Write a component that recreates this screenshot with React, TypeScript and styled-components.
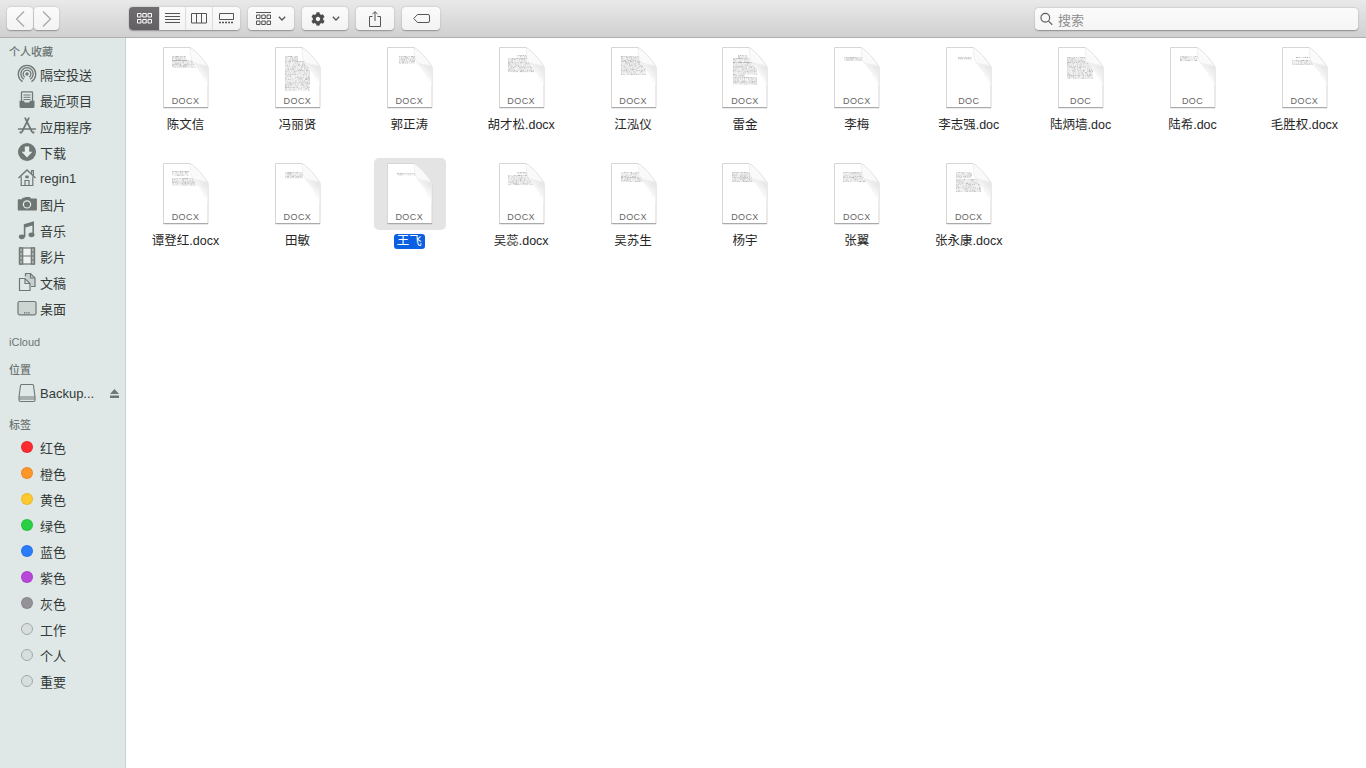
import styled, { createGlobalStyle } from "styled-components";
import { FaCog } from "react-icons/fa";
import { ReactNode } from "react";

type Block = [number, number, number, number];
type FileEntry = { name: string; kind: string; blocks: Block[]; selected?: boolean };

const FILES: FileEntry[] = [
    { name: "陈文信", kind: "DOCX", blocks: [[23, 37, 14, 18], [23, 49, 18, 25]] },
    { name: "冯丽贤", kind: "DOCX", blocks: [[24, 37, 14, 19], [24, 49, 19, 48]] },
    { name: "郭正涛", kind: "DOCX", blocks: [[26, 42, 14, 21]] },
    { name: "胡才松.docx", kind: "DOCX", blocks: [[32, 42, 13, 15], [23, 42, 16, 19], [23, 49, 20, 30]] },
    { name: "江泓仪", kind: "DOCX", blocks: [[24, 42, 14, 19], [24, 49, 19, 33]] },
    { name: "雷金", kind: "DOCX", blocks: [[30, 40, 13, 16], [25, 42, 16, 20], [25, 49, 20, 33], [25, 37, 33, 35], [25, 49, 35, 42]] },
    { name: "李梅", kind: "DOCX", blocks: [[24, 42, 15, 18]] },
    { name: "李志强.doc", kind: "DOC", blocks: [[26, 40, 15, 17]] },
    { name: "陆炳墙.doc", kind: "DOC", blocks: [[23, 42, 15, 20], [23, 49, 20, 36]] },
    { name: "陆希.doc", kind: "DOC", blocks: [[24, 42, 14, 19]] },
    { name: "毛胜权.docx", kind: "DOCX", blocks: [[28, 42, 15, 16], [24, 49, 18, 22]] },
    { name: "谭登红.docx", kind: "DOCX", blocks: [[23, 40, 13, 18], [23, 49, 20, 27]] },
    { name: "田敏", kind: "DOCX", blocks: [[24, 42, 14, 20]] },
    { name: "王飞", kind: "DOCX", blocks: [[24, 42, 15, 17]], selected: true },
    { name: "吴蕊.docx", kind: "DOCX", blocks: [[32, 42, 14, 16], [23, 49, 17, 27]] },
    { name: "吴苏生", kind: "DOCX", blocks: [[24, 42, 14, 19], [24, 49, 19, 24]] },
    { name: "杨宇", kind: "DOCX", blocks: [[24, 42, 14, 19], [24, 49, 19, 24]] },
    { name: "张翼", kind: "DOCX", blocks: [[23, 42, 14, 19], [23, 48, 19, 24]] },
    { name: "张永康.docx", kind: "DOCX", blocks: [[24, 40, 14, 20], [24, 49, 21, 33]] },
];

const TAGS: { name: string; color: string; hollow?: boolean }[] = [
    { name: "红色", color: "#fb2b30" },
    { name: "橙色", color: "#fd962a" },
    { name: "黄色", color: "#fdc92d" },
    { name: "绿色", color: "#2ad043" },
    { name: "蓝色", color: "#2b7cf8" },
    { name: "紫色", color: "#b846d8" },
    { name: "灰色", color: "#939296" },
    { name: "工作", color: "#d8dedc", hollow: true },
    { name: "个人", color: "#d8dedc", hollow: true },
    { name: "重要", color: "#d8dedc", hollow: true },
];

const G = "#6f7775";

const SideIcons: Record<string, ReactNode> = {
    airdrop: (
        <svg width="20" height="20" viewBox="0 0 20 20" fill="none" stroke={G}>
            <path strokeWidth="1.3" d="M5.6 17.6A8.7 8.7 0 1 1 14.4 17.6" />
            <path strokeWidth="1.3" d="M6.9 15.2A6.2 6.2 0 1 1 13.1 15.2" />
            <path strokeWidth="1.3" d="M7.8 13.2A3.9 3.9 0 1 1 12.2 13.2" />
            <circle cx="10" cy="10" r="1.7" fill={G} stroke="none" />
        </svg>
    ),
    recent: (
        <svg width="20" height="20" viewBox="0 0 20 20" fill="none" stroke={G}>
            <path strokeWidth="1.3" d="M4.5 11V2.7a.9.9 0 0 1 .9-.9h9.2a.9.9 0 0 1 .9.9V11" />
            <path strokeWidth="1" d="M6.5 5h7M6.5 7.3h7M6.5 9.6h7" />
            <path fill={G} stroke="none" d="M2.5 10.8h4.4l1 1.8h4.2l1-1.8h4.4v5.6a1.5 1.5 0 0 1-1.5 1.5H4a1.5 1.5 0 0 1-1.5-1.5z" />
        </svg>
    ),
    apps: (
        <svg width="20" height="20" viewBox="0 0 20 20" fill="none" stroke={G} strokeLinecap="round">
            <path strokeWidth="1.7" d="M8.2 2.2 14.8 15.5M11.8 2.2 5.200 15.500" />
            <path strokeWidth="1.400" d="M1.500 13h17" />
            <circle cx="3.800" cy="16.400" r="1.200" fill={G} stroke="none" />
            <circle cx="16.200" cy="16.400" r="1.200" fill={G} stroke="none" />
        </svg>
    ),
    download: (
        <svg width="20" height="20" viewBox="0 0 20 20">
            <circle cx="10" cy="10" r="9" fill={G} />
            <path fill="#e6eeec" d="M7.8 4.6h4.4v5.2h3.2L10 15.6 4.6 9.8h3.2z" />
        </svg>
    ),
    home: (
        <svg width="20" height="20" viewBox="0 0 20 20" fill="none" stroke={G} strokeWidth="1.2">
            <path d="M1.500 10 10 2l8.500 8" strokeWidth="1.400" />
            <path d="M14.600 5.600V2.600h1.800v4.600" />
            <path d="M4.200 8.500v9h11.600v-9" />
            <path d="M8 17.500v-5h4v5" />
            <rect x="8.300" y="7.600" width="3.400" height="2.600" fill={G} stroke="none" />
        </svg>
    ),
    photos: (
        <svg width="20" height="20" viewBox="0 0 20 20">
            <path fill={G} d="M1.500 5.200h3.200l1-1.400h1.600l.8-.8h4.800l1 1.400h5.400a.7.7 0 0 1 .6.8v10.500a.7.7 0 0 1-.7.7H1.400a.7.7 0 0 1-.6-.7V5.900a.7.7 0 0 1 .7-.7z" />
            <circle cx="10" cy="10.400" r="4.200" fill="#e6eeec" />
            <circle cx="10" cy="10.400" r="3" fill={G} />
        </svg>
    ),
    music: (
        <svg width="20" height="20" viewBox="0 0 20 20" fill={G}>
            <path d="M6.800 4.200 17 1.200v13h-1.600V5.600l-7 2V17H6.800z" />
            <ellipse cx="4.800" cy="16.800" rx="3" ry="2.400" />
            <ellipse cx="14.500" cy="14.800" rx="3" ry="2.400" />
        </svg>
    ),
    movies: (
        <svg width="20" height="20" viewBox="0 0 20 20" fill="none" stroke={G} strokeWidth="1.2">
            <rect x="2.500" y="2" width="15" height="16" fill="#eef3f1" />
            <rect x="2.500" y="2" width="3.200" height="16" fill="#a9b0ae" />
            <rect x="14.300" y="2" width="3.200" height="16" fill="#a9b0ae" />
            <path d="M5.700 10h8.600M2.500 6h3.200M2.500 10h3.200M2.500 14h3.200M14.300 6h3.200M14.300 10h3.200M14.300 14h3.200" />
        </svg>
    ),
    docs: (
        <svg width="20" height="20" viewBox="0 0 20 20" fill="none" stroke={G} strokeWidth="1.2">
            <path fill="#c9d1cf" d="M8.500 4.500v-3h5l4.500 4.500v8.500h-4" />
            <path fill="#dfe8e6" d="M2.500 6.500h5.500l5 5v7h-10.500z" />
            <path d="M8 6.500v5h5M13.500 1.500v4.500h4.500" />
        </svg>
    ),
    desktop: (
        <svg width="20" height="20" viewBox="0 0 20 20" fill="none" stroke={G}>
            <rect x="1" y="3.500" width="18" height="13.300" rx="1.500" strokeWidth="1.200" fill="#cdd5d3" />
            <path strokeWidth="1.200" strokeDasharray="1.200 1" stroke="#59605f" d="M7 14.800h6" />
        </svg>
    ),
    disk: (
        <svg width="20" height="20" viewBox="0 0 20 20" fill="none" stroke={G} strokeWidth="1.100">
            <path d="M4.500 1.500h11a1 1 0 0 1 1 1L18 14v3a1.500 1.500 0 0 1-1.500 1.500h-13A1.500 1.500 0 0 1 2 17v-3L3.500 2.500a1 1 0 0 1 1-1z" />
            <path d="M2 14h16M2 16h16" />
        </svg>
    ),
};

const FAVOURITES = [
    { name: "隔空投送", icon: "airdrop" },
    { name: "最近项目", icon: "recent" },
    { name: "应用程序", icon: "apps" },
    { name: "下载", icon: "download" },
    { name: "regin1", icon: "home" },
    { name: "图片", icon: "photos" },
    { name: "音乐", icon: "music" },
    { name: "影片", icon: "movies" },
    { name: "文稿", icon: "docs" },
    { name: "桌面", icon: "desktop" },
];

function noiseRects(blocks: Block[], seed: number) {
    // small fixed generator so the scribble stays the same between renders
    let s = seed * 7919 + 13;
    const next = () => {
        s = (s * 16807) % 2147483647;
        return s / 2147483647;
    };
    const out: ReactNode[] = [];
    blocks.forEach(([x1, x2, y1, y2], b) => {
        for (let y = y1; y < y2; y += 1.3) {
            let x = x1;
            while (x < x2) {
                const w = Math.min(0.7 + next() * 1.8, x2 - x);
                out.push(<rect key={`${b}-${y}-${x}`} x={x} y={y} width={w} height={1} fill="#999999" opacity={0.2 + next() * 0.55} />);
                x += w + 0.2 + next() * 0.6;
            }
        }
    });
    return out;
}

function FileIcon({ blocks, seed }: { blocks: Block[]; seed: number }) {
    return (
        <svg width="72" height="72" viewBox="0 0 72 72">
            <defs>
                <linearGradient id={`fold${seed}`} x1="0.75" y1="0.1" x2="0.4" y2="0.6">
                    <stop offset="0" stopColor="#e6e6e6" />
                    <stop offset="1" stopColor="#ffffff" />
                </linearGradient>
                <filter id={`soft${seed}`} x="-10%" y="-10%" width="120%" height="120%">
                    <feGaussianBlur stdDeviation="0.45" />
                </filter>
            </defs>
            <path d="M14.500 5.500H41C47 9 54 17 59 25V65.500H14.500Z" fill="#fff" stroke="#d6d6d6" strokeWidth="1" />
            <path d="M14.500 65.600H59" stroke="#aaaaaa" strokeWidth="1.200" />
            <g filter={`url(#soft${seed})`}>{noiseRects(blocks, seed + 1)}</g>
            <path d="M43 20 C47 23 54 22 58.500 25 V44 C54 34 48 26 43 20Z" fill={`url(#fold${seed})`} />
            <path d="M41 5.500 C42 13 41 18 45 21 C49 23 55 21.500 59 25 C54 17 47 9 41 5.500Z" fill="#fafafa" stroke="#e2e2e2" strokeWidth="0.5" />
        </svg>
    );
}

function App() {
    return (
        <>
            <GlobalStyle />
            <S.Window>
                <S.Toolbar>
                    <S.NavGroup>
                        <S.Button $w={26}>
                            <svg width="12" height="18" viewBox="0 0 12 18" fill="none" stroke="#a9a9a9" strokeWidth="1.300"><path d="M10 1.500 2.500 9l7.500 7.500" /></svg>
                        </S.Button>
                        <S.Button $w={25}>
                            <svg width="12" height="18" viewBox="0 0 12 18" fill="none" stroke="#a9a9a9" strokeWidth="1.300"><path d="M2 1.500 9.500 9 2 16.500" /></svg>
                        </S.Button>
                    </S.NavGroup>
                    <S.Segments>
                        <S.Segment $w={30} $active>
                            <svg width="15" height="11" viewBox="0 0 15 11" fill="none" stroke="#fff"><path d="M.5.500h3.500v3.500H.5zM5.750.500h3.500v3.500h-3.500zM11 .500h3.500v3.500H11zM.5 6.500h3.500V10H.5zM5.750 6.500h3.500V10h-3.500zM11 6.500h3.500V10H11z" /></svg>
                        </S.Segment>
                        <S.Segment $w={26}>
                            <svg width="15" height="11" viewBox="0 0 15 11" fill="none" stroke="#555"><path d="M0 .500h15M0 3.500h15M0 6.500h15M0 9.500h15" /></svg>
                        </S.Segment>
                        <S.Segment $w={27}>
                            <svg width="16" height="11" viewBox="0 0 16 11" fill="none" stroke="#555"><path d="M.5.500h15v9.500H.5zM5.500.500V10M10.500.500V10" /></svg>
                        </S.Segment>
                        <S.Segment $w={28}>
                            <svg width="15" height="11" viewBox="0 0 15 11" fill="none" stroke="#555"><path d="M.5.500h14v6H.5z" /><path d="M0 9.500h15" strokeDasharray="2 1" strokeWidth="1.500" /></svg>
                        </S.Segment>
                    </S.Segments>
                    <S.Button $w={46}>
                        <svg width="15" height="13" viewBox="0 0 15 13" fill="none" stroke="#555"><path d="M0 .500h15" /><path d="M.5 3h3.500v3.500H.5zM5.750 3h3.500v3.500h-3.500zM11 3h3.500v3.500H11zM.5 9h3.500v3.500H.5zM5.750 9h3.500v3.500h-3.500zM11 9h3.500v3.500H11z" /></svg>
                        <S.Chevron width="8" height="5" viewBox="0 0 8 5" fill="none" stroke="#555" strokeWidth="1.300"><path d="M.8.800 4 4 7.200.800" /></S.Chevron>
                    </S.Button>
                    <S.Button $w={46}>
                        <FaCog size={14} color="#4d4d4d" />
                        <S.Chevron width="8" height="5" viewBox="0 0 8 5" fill="none" stroke="#555" strokeWidth="1.300"><path d="M.8.800 4 4 7.200.800" /></S.Chevron>
                    </S.Button>
                    <S.Button $w={38}>
                        <svg width="12" height="16" viewBox="0 0 12 16" fill="none" stroke="#555"><path d="M3.500 5.500H.5v10h11v-10h-3M6 10V.8M3.500 3 6 .7 8.500 3" /></svg>
                    </S.Button>
                    <S.Button $w={38}>
                        <svg width="17" height="9" viewBox="0 0 17 9" fill="none" stroke="#555"><path d="M4.500.500H15a1.500 1.500 0 0 1 1.500 1.500v5A1.500 1.500 0 0 1 15 8.500H4.500L.7 4.500z" /></svg>
                    </S.Button>
                    <S.Search>
                        <svg width="13" height="14" viewBox="0 0 14 14" fill="none" stroke="#5c5c5c" strokeWidth="1.200"><circle cx="5.700" cy="5.700" r="4.700" /><path d="m9.200 9.200 4 4" /></svg>
                        <S.SearchText>搜索</S.SearchText>
                    </S.Search>
                </S.Toolbar>
                <S.Body>
                    <S.Sidebar>
                        <S.SectionTitle $top={5}>个人收藏</S.SectionTitle>
                        {FAVOURITES.map((f) => (
                            <S.Row key={f.name}>
                                <S.RowIcon>{SideIcons[f.icon]}</S.RowIcon>
                                {f.name}
                            </S.Row>
                        ))}
                        <S.SectionTitle $top={12}>iCloud</S.SectionTitle>
                        <S.SectionTitle $top={10}>位置</S.SectionTitle>
                        <S.RowGroup $top={1}>
                            <S.Row>
                                <S.RowIcon>{SideIcons.disk}</S.RowIcon>
                                Backup...
                                <S.Eject width="9" height="9" viewBox="0 0 9 9" fill={G}><path d="M4.500 0 9 5H0zM0 6.500h9V9H0z" /></S.Eject>
                            </S.Row>
                        </S.RowGroup>
                        <S.SectionTitle $top={10}>标签</S.SectionTitle>
                        <S.RowGroup $top={0}>
                            {TAGS.map((t) => (
                                <S.Row key={t.name}>
                                    <S.RowIcon><S.Dot $color={t.color} $hollow={t.hollow} /></S.RowIcon>
                                    {t.name}
                                </S.Row>
                            ))}
                        </S.RowGroup>
                    </S.Sidebar>
                    <S.Grid>
                        {FILES.map((f, i) => (
                            <S.Item key={f.name}>
                                <S.IconBox $selected={f.selected}>
                                    <FileIcon blocks={f.blocks} seed={i} />
                                    <S.Kind>{f.kind}</S.Kind>
                                </S.IconBox>
                                <S.Label>
                                    <S.LabelText $selected={f.selected}>{f.name}</S.LabelText>
                                </S.Label>
                            </S.Item>
                        ))}
                    </S.Grid>
                </S.Body>
            </S.Window>
        </>
    );
}

const GlobalStyle = createGlobalStyle`
    html, body {
        margin: 0;
        padding: 0;
        height: 100%;
        overflow: hidden;
        background: #fff;
        font-family: "Liberation Sans", "Noto Sans CJK SC", sans-serif;
    }
`;

const S = {
    Window: styled.div`
        display: flex;
        flex-direction: column;
        width: 1366px;
        height: 768px;
    `,

    Toolbar: styled.div`
        display: flex;
        align-items: center;
        gap: 8px;
        box-sizing: border-box;
        height: 38px;
        flex: none;
        padding: 0 8px 0 7px;
        background: linear-gradient(#e9e9e9, #d0d0d0);
        border-bottom: 1px solid #afafaf;
    `,

    NavGroup: styled.div`
        display: flex;
        gap: 1px;
        margin-right: 62px;
    `,

    Button: styled.div<{ $w: number }>`
        display: flex;
        align-items: center;
        justify-content: center;
        gap: 7px;
        box-sizing: border-box;
        width: ${(p) => p.$w}px;
        height: 23px;
        background: linear-gradient(#fbfbfb, #f3f3f3);
        border-radius: 4px;
        box-shadow: 0 0.5px 1.5px rgba(0, 0, 0, 0.32);
    `,

    Chevron: styled.svg`
        flex: none;
    `,

    Segments: styled.div`
        display: flex;
        height: 23px;
        border-radius: 4px;
        overflow: hidden;
        box-shadow: 0 0.5px 1.5px rgba(0, 0, 0, 0.32);
        background: #f6f6f6;
    `,

    Segment: styled.div<{ $w: number; $active?: boolean }>`
        display: flex;
        align-items: center;
        justify-content: center;
        box-sizing: border-box;
        width: ${(p) => p.$w}px;
        background: ${(p) => (p.$active ? "linear-gradient(#6f6d6f, #626062)" : "linear-gradient(#fbfbfb, #f3f3f3)")};
        border-left: ${(p) => (p.$active ? "none" : "1px solid #dcdcdc")};
    `,

    Search: styled.div`
        display: flex;
        align-items: center;
        gap: 5px;
        box-sizing: border-box;
        width: 323px;
        height: 22px;
        margin-left: auto;
        padding-left: 5px;
        background: linear-gradient(#fbfbfb, #f5f5f5);
        border-radius: 4px;
        box-shadow: 0 0.5px 1.5px rgba(0, 0, 0, 0.35);
    `,

    SearchText: styled.span`
        padding-top: 1px;
        font-size: 13px;
        color: #8f8f8f;
    `,

    Body: styled.div`
        display: flex;
        flex: 1;
        min-height: 0;
    `,

    Sidebar: styled.div`
        box-sizing: border-box;
        width: 126px;
        flex: none;
        background: #dfe8e6;
        border-right: 1px solid #c8cfcd;
    `,

    SectionTitle: styled.div<{ $top: number }>`
        height: 18px;
        margin-top: ${(p) => p.$top}px;
        padding-left: 9px;
        font-size: 11px;
        font-weight: 500;
        line-height: 18px;
        color: #6c7473;
    `,

    RowGroup: styled.div<{ $top: number }>`
        margin-top: ${(p) => p.$top}px;
    `,

    Row: styled.div`
        display: flex;
        align-items: center;
        gap: 3px;
        height: 26px;
        padding-left: 17px;
        font-size: 13px;
        color: #333a39;
        white-space: nowrap;
    `,

    RowIcon: styled.span`
        display: flex;
        align-items: center;
        justify-content: center;
        width: 20px;
        height: 20px;
        flex: none;
    `,

    Eject: styled.svg`
        margin-left: 13px;
    `,

    Dot: styled.span<{ $color: string; $hollow?: boolean }>`
        box-sizing: border-box;
        width: 12px;
        height: 12px;
        border-radius: 50%;
        background: ${(p) => p.$color};
        border: 1px solid ${(p) => (p.$hollow ? "#a3a9a8" : "rgba(0, 0, 0, 0.08)")};
    `,

    Grid: styled.div`
        display: grid;
        grid-template-columns: repeat(11, 72px);
        grid-auto-rows: 116px;
        column-gap: 39.9px;
        align-content: start;
        flex: 1;
        padding: 4px 0 0 23px;
        background: #fff;
    `,

    Item: styled.div`
        display: flex;
        flex-direction: column;
        align-items: center;
        width: 72px;
    `,

    IconBox: styled.div<{ $selected?: boolean }>`
        position: relative;
        width: 72px;
        height: 72px;

        &::before {
            content: "";
            position: absolute;
            inset: 0 -1px 0 1px;
            border-radius: 5px;
            background: ${(p) => (p.$selected ? "#e4e4e4" : "transparent")};
        }

        svg {
            position: relative;
        }
    `,

    Kind: styled.div`
        position: absolute;
        left: 1px;
        right: 0;
        top: 53px;
        text-align: center;
        font-size: 9px;
        line-height: 12px;
        letter-spacing: 0.4px;
        color: #666;
    `,

    Label: styled.div`
        margin-top: 4px;
        padding-left: 1px;
        font-size: 12.5px;
        line-height: 15px;
        white-space: nowrap;
        text-align: center;
    `,

    LabelText: styled.span<{ $selected?: boolean }>`
        display: inline-block;
        padding: 0 3px;
        border-radius: 3px;
        color: ${(p) => (p.$selected ? "#fff" : "#262626")};
        background: ${(p) => (p.$selected ? "#0a5fe3" : "transparent")};
    `,
};

export default App;
